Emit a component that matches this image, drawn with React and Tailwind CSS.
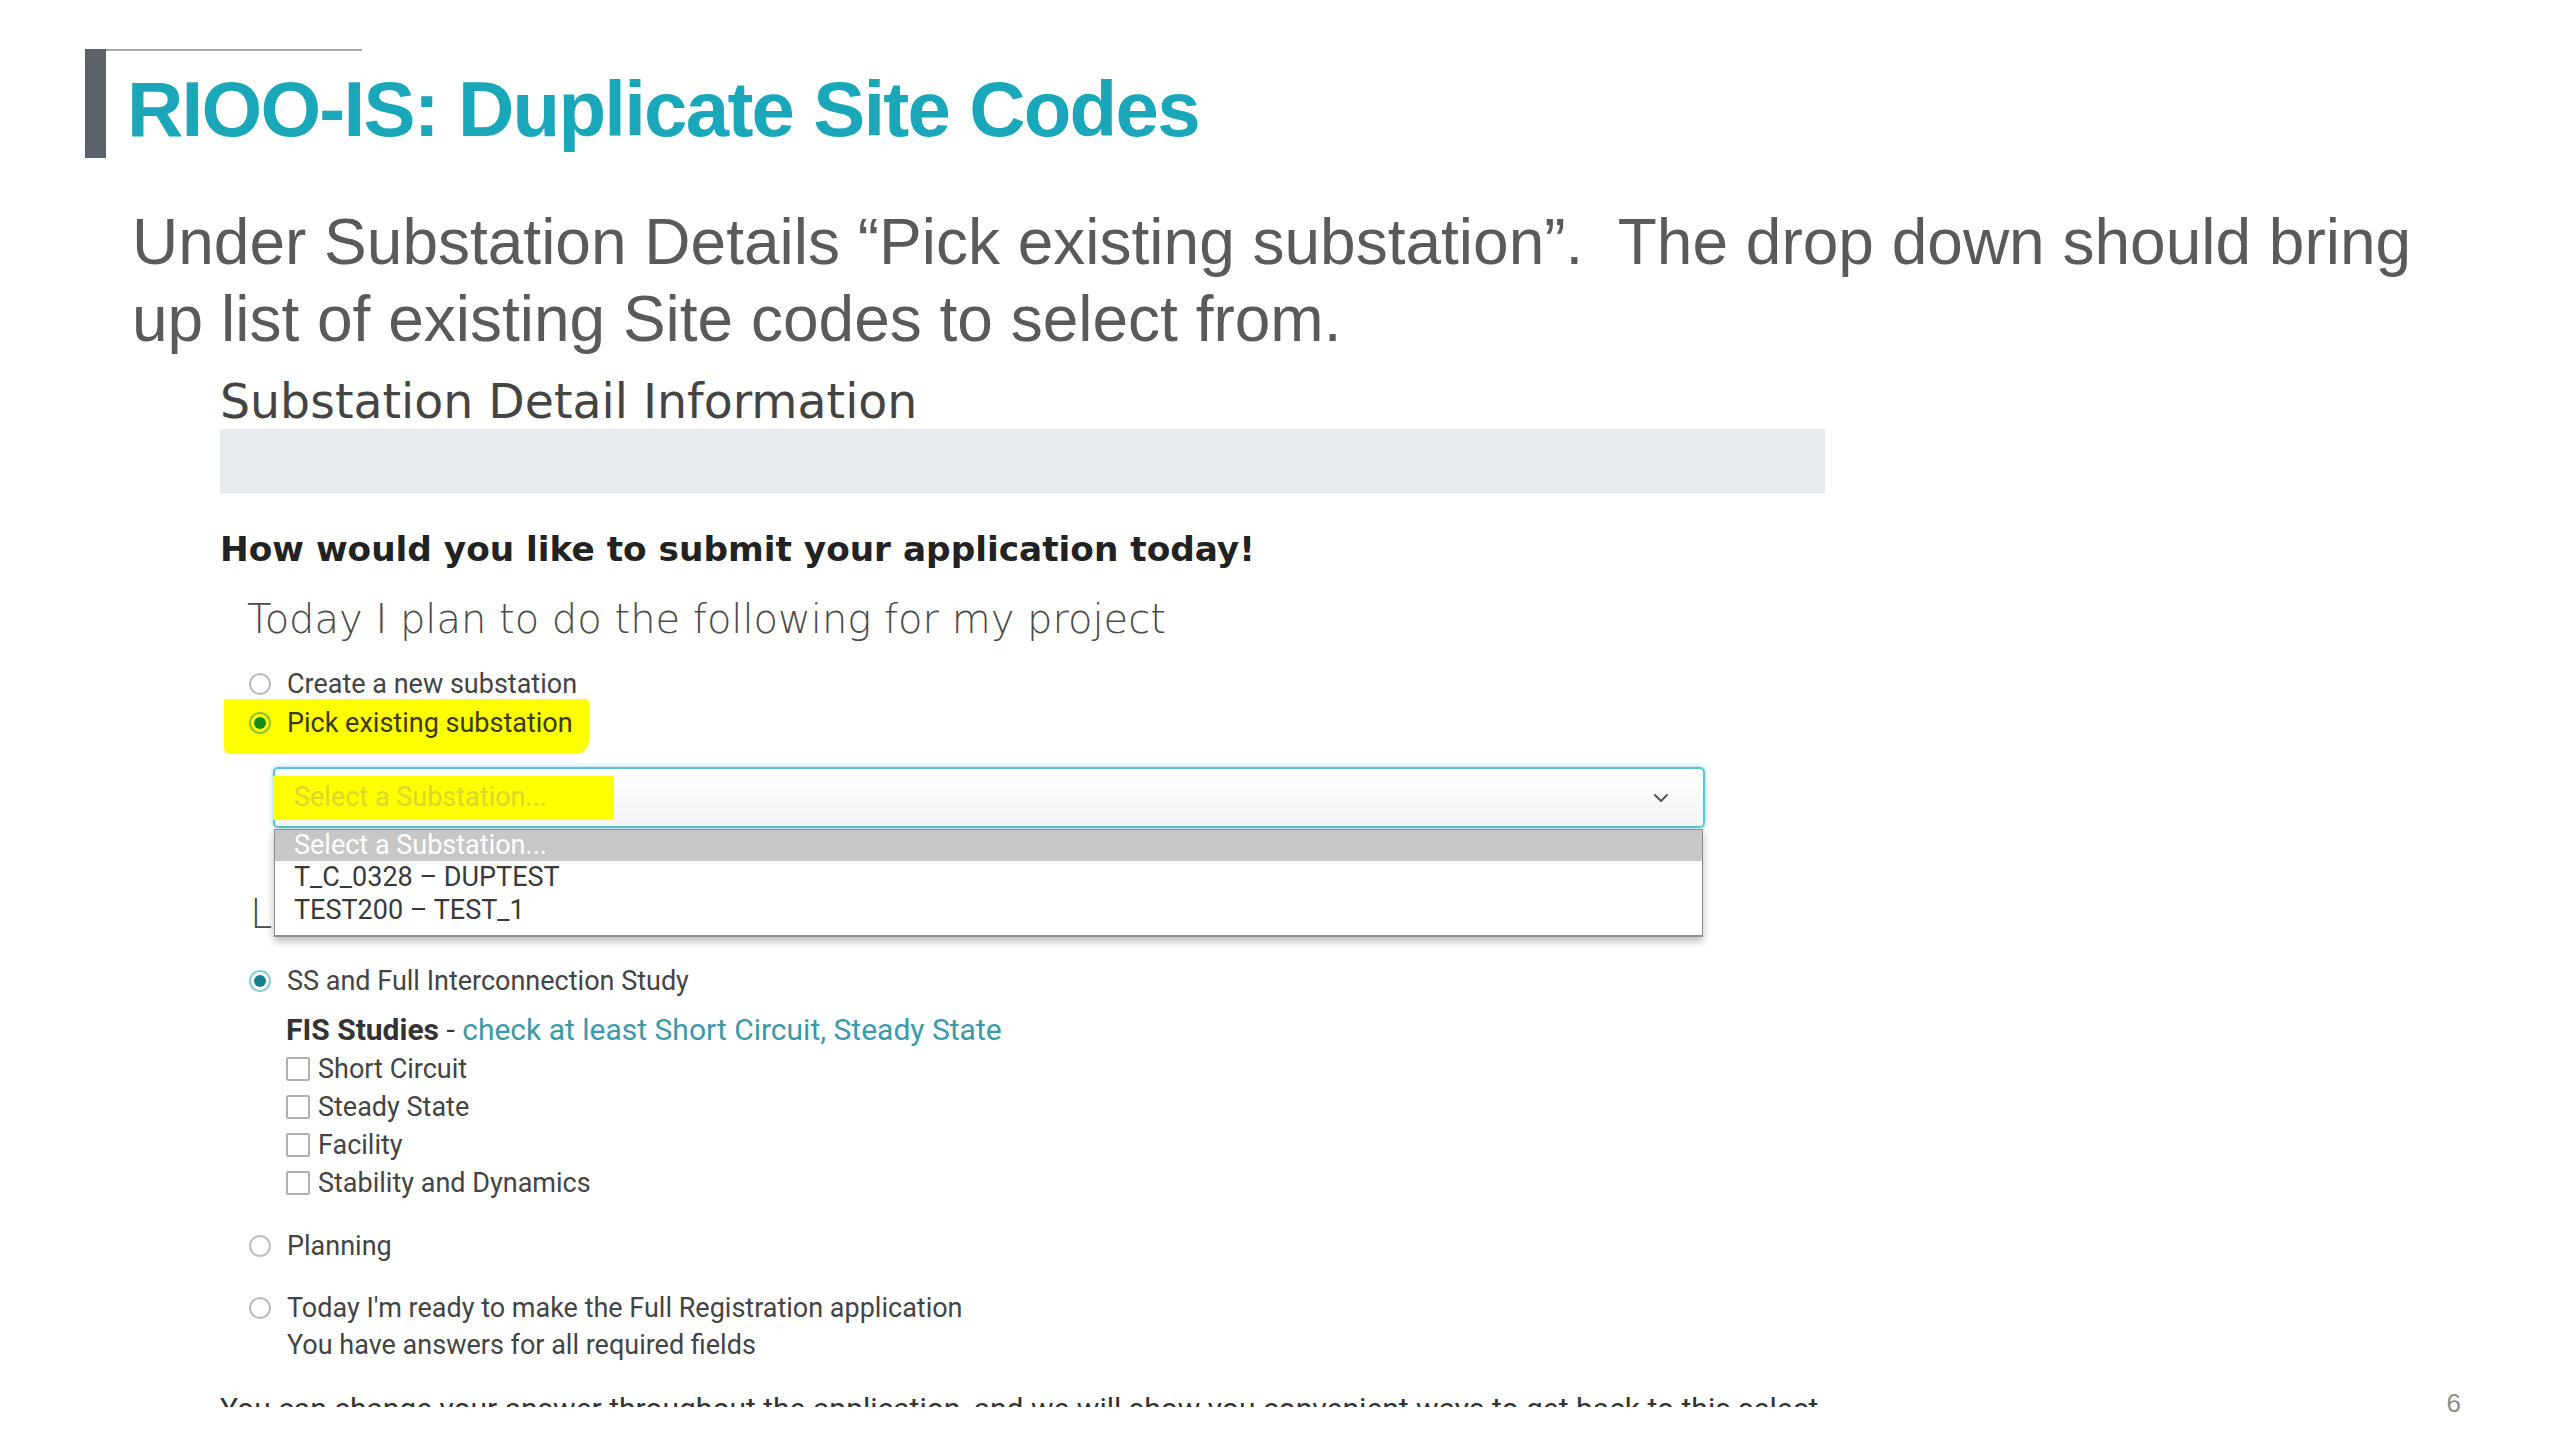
import React from "react";
import { ChevronDown } from "lucide-react";

function RadioOff() {
  return <span className="block w-[22px] h-[22px] rounded-full border-2 border-[#bdbdbd] bg-white shrink-0" />;
}

function RadioTeal() {
  return (
    <span className="w-[22px] h-[22px] rounded-full border-2 border-[#86ccd5] bg-white flex items-center justify-center shrink-0">
      <span className="w-[12px] h-[12px] rounded-full bg-[#16808e]" />
    </span>
  );
}

function RadioGreen() {
  return (
    <span className="w-[22px] h-[22px] rounded-full border-2 border-[#86c23a] bg-[#ffff00] flex items-center justify-center shrink-0">
      <span className="w-[12px] h-[12px] rounded-full bg-[#178a1c]" />
    </span>
  );
}

function Check({ label }) {
  return (
    <div className="flex items-center h-[38px] gap-[8px] ml-[66px] shrink-0">
      <span className="block w-[24px] h-[24px] border-2 border-[#b0b0b0] rounded-[2px] bg-white shrink-0" />
      <span className="text-[27px] text-[#444444]">{label}</span>
    </div>
  );
}

export default function App() {
  return (
    <div className="w-[2560px] h-[1440px] bg-white overflow-hidden font-['Liberation_Sans',Arial,sans-serif]">
      {/* Title block */}
      <div className="pt-[49px] pl-[85px] flex">
        <div className="w-[21px] h-[109px] bg-[#5b6269]" />
        <div className="flex flex-col">
          <div className="h-[2px] w-[256px] bg-[#a8a8a8]" />
          <h1 className="mt-[19px] ml-[21px] text-[78px] leading-[78px] font-bold tracking-[-1.75px] text-[#19a7b9] whitespace-nowrap">
            RIOO-IS: Duplicate Site Codes
          </h1>
        </div>
      </div>

      {/* Subtitle */}
      <p className="mt-[46px] ml-[132px] text-[64px] leading-[77px] text-[#5a5a5a] whitespace-pre">
        {"Under Substation Details \u201CPick existing substation\u201D.  The drop down should bring"}
        <br />
        {"up list of existing Site codes to select from."}
      </p>

      {/* Screenshot + page number */}
      <div className="flex items-end">
        <div className="ml-[220px] w-[1605px] h-[1049px] shrink-0 overflow-hidden flex flex-col *:shrink-0 font-['Roboto',sans-serif] text-[27px] text-[#444444]">
          <h2 className="mt-[18px] font-['DejaVu_Sans',sans-serif] text-[47.4px] leading-[52px] text-[#444444] whitespace-nowrap">
            Substation Detail Information
          </h2>
          <div className="mt-[1px] h-[64px] bg-[#e6e9ee]" />

          <h3 className="mt-[36px] font-['DejaVu_Sans',sans-serif] font-bold text-[34.3px] leading-[40px] text-[#222222] whitespace-nowrap">
            How would you like to submit your application today!
          </h3>
          <div className="mt-[28px] ml-[27px] font-['DejaVu_Sans',sans-serif] font-extralight text-[40px] leading-[44px] text-[#4a4a4a] whitespace-nowrap">
            Today I plan to do the following for my project
          </div>

          <div className="mt-[25px] ml-[29px] flex items-center h-[36px] gap-[16px]">
            <RadioOff />
            <span>Create a new substation</span>
          </div>

          <div className="-mt-[3px] ml-[4px] w-fit bg-[#ffff00] pl-[25px] pr-[16px] pt-[6px] pb-[13px] rounded-br-[14px] rounded-tr-[4px] rounded-bl-[6px]">
            <div className="flex items-center h-[36px] gap-[16px]">
              <RadioGreen />
              <span className="text-[#3a3a12]">Pick existing substation</span>
            </div>
          </div>

          <div className="relative mt-[13px] ml-[53px] w-[1432px] h-[61px]">
            <div className="h-full rounded-[5px] border-2 border-[#5cc3d3] shadow-[0_0_5px_rgba(92,195,211,0.7)] bg-gradient-to-b from-white to-[#f4f4f7] flex items-center justify-between pr-[30px]">
              <span className="-ml-[2px] h-[44px] w-[341px] bg-[#ffff00] flex items-center pl-[21px] text-[#d8d82c] rounded-r-[3px]">
                Select a Substation...
              </span>
              <ChevronDown size={24} strokeWidth={2} className="text-[#555555]" />
            </div>
            <div className="absolute left-[1px] right-[2px] top-[62px] z-10 bg-white border border-[#8e8e8e] border-b-2 shadow-[0_4px_8px_rgba(0,0,0,0.28)] pb-[8px]">
              <div className="h-[31px] bg-[#c7c7c7] text-white flex items-center pl-[19px]">Select a Substation...</div>
              <div className="h-[33px] flex items-center pl-[19px] text-[#3a3a3a]">T_C_0328 – DUPTEST</div>
              <div className="h-[33px] flex items-center pl-[19px] text-[#3a3a3a]">TEST200 – TEST_1</div>
            </div>
          </div>

          <div className="mt-[64px] ml-[30px] font-['DejaVu_Sans',sans-serif] font-extralight text-[40px] leading-[44px] text-[#4a4a4a] whitespace-nowrap">
            Level of study for my project
          </div>

          <div className="mt-[27px] ml-[29px] flex items-center h-[36px] gap-[16px]">
            <RadioTeal />
            <span>SS and Full Interconnection Study</span>
          </div>

          <div className="mt-[12px] ml-[66px] h-[36px] flex items-center whitespace-pre text-[30px]">
            <span className="font-bold text-[#333333]">FIS Studies</span>
            <span className="text-[#333333]"> - </span>
            <span className="text-[#3a9aa8]">check at least Short Circuit, Steady State</span>
          </div>

          <div className="mt-[3px] flex flex-col">
            <Check label="Short Circuit" />
            <Check label="Steady State" />
            <Check label="Facility" />
            <Check label="Stability and Dynamics" />
          </div>

          <div className="mt-[26px] ml-[29px] flex items-center h-[36px] gap-[16px]">
            <RadioOff />
            <span>Planning</span>
          </div>

          <div className="mt-[26px] ml-[29px] flex items-center h-[36px] gap-[16px]">
            <RadioOff />
            <span>Today I'm ready to make the Full Registration application</span>
          </div>
          <div className="mt-[1px] ml-[67px] h-[36px] flex items-center">You have answers for all required fields</div>

          <div className="mt-[28px] text-[30px] leading-[36px] text-[#333333] whitespace-nowrap">
            You can change your answer throughout the application, and we will show you convenient ways to get back to this select
          </div>
        </div>

        <div className="ml-auto mr-[99px] -mb-[11px] text-[26px] leading-[30px] text-[#8c8c8c]">6</div>
      </div>
    </div>
  );
}
